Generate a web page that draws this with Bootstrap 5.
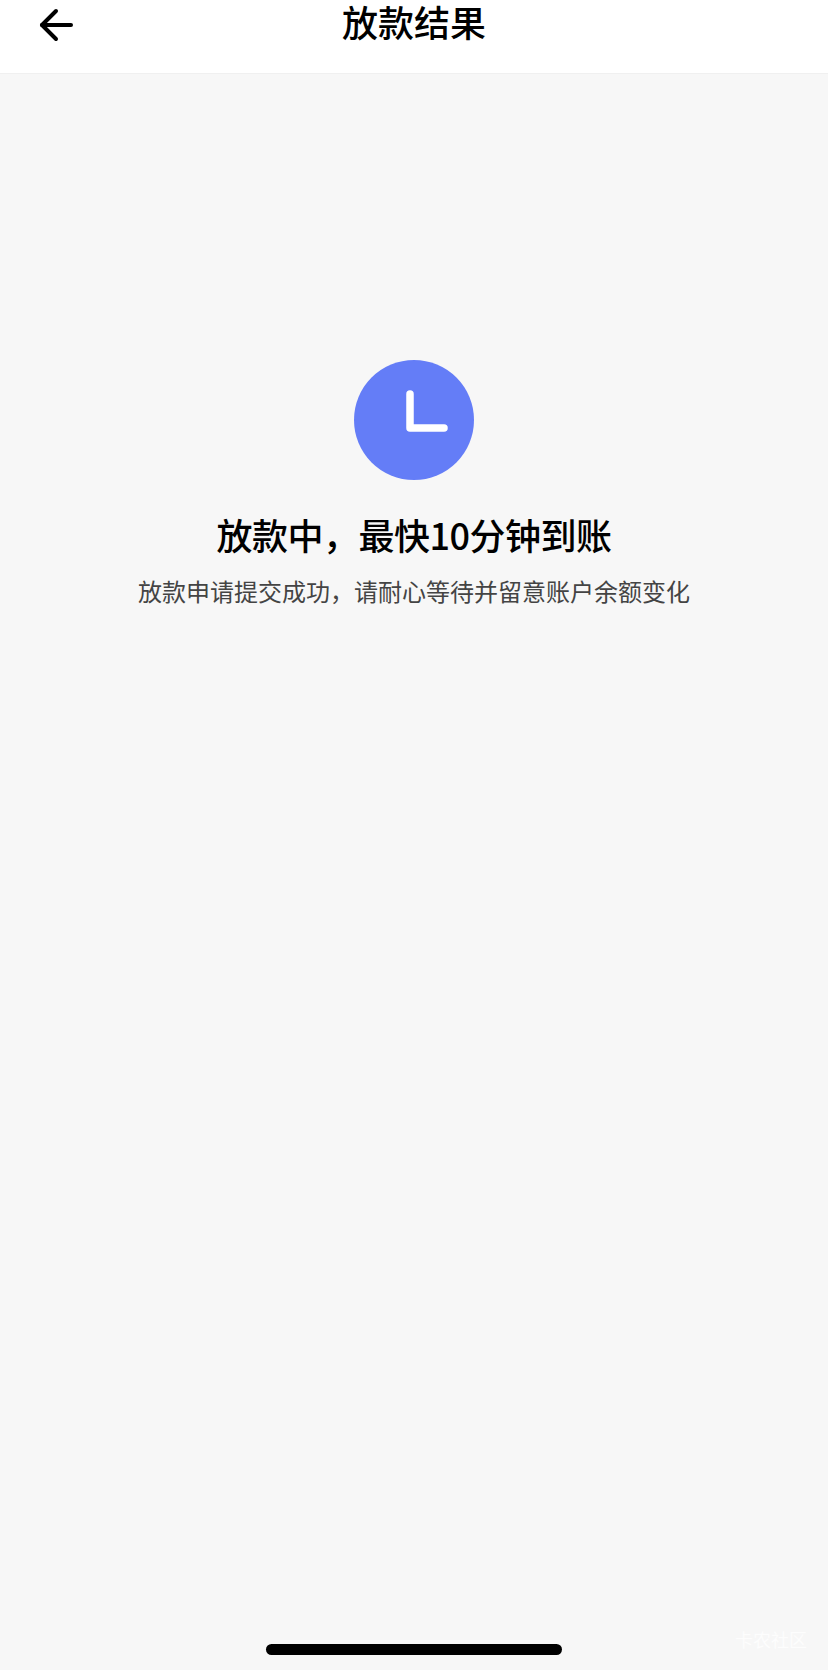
<!DOCTYPE html>
<html lang="zh-CN">
<head>
    <meta charset="UTF-8">
    <meta name="viewport" content="width=device-width, initial-scale=1.0">
    <title>放款结果</title>
    <link href="https://cdn.jsdelivr.net/npm/bootstrap@5.3.3/dist/css/bootstrap.min.css" rel="stylesheet">
    <style>
        body {
            background-color: #f7f7f7;
            font-family: "Noto Sans CJK SC", "Noto Sans", sans-serif;
        }
        .page-wrap {
            height: 1670px;
        }
        .top-bar {
            height: 74px;
            padding-bottom: 24px;
            background-color: #fff;
            border-bottom: 1px solid #f0f0f0;
        }
        .back-btn {
            left: 37px;
            top: 6px;
            width: 38px;
            height: 38px;
        }
        .page-title {
            font-family: "Liberation Sans", "Noto Sans CJK SC", sans-serif;
            font-size: 36px;
            font-weight: 500;
            line-height: 43px;
            color: #000;
        }
        .status-circle {
            width: 120px;
            height: 120px;
            margin-top: 286px;
            background-color: #647df7;
        }
        .status-title {
            margin-top: 29px;
            font-size: 36px;
            font-weight: 500;
            line-height: 50px;
            letter-spacing: -0.5px;
            color: #000;
        }
        .status-desc {
            margin-top: 15px;
            font-size: 24px;
            line-height: 34px;
            color: #444;
        }
        .home-bar {
            width: 296px;
            height: 11px;
            margin-bottom: 15px;
            background-color: #000;
        }
        .watermark {
            right: 21px;
            bottom: 20px;
            font-size: 18px;
            line-height: 22px;
            color: rgba(255, 255, 255, .75);
        }
    </style>
</head>
<body>

<div class="page-wrap position-relative d-flex flex-column align-items-center">
    <div class="top-bar w-100 position-relative d-flex justify-content-center align-items-center">
        <div class="back-btn position-absolute">
            <svg width="38" height="38" viewBox="0 0 38 38" fill="none" stroke="#000" stroke-width="4" stroke-linecap="round" stroke-linejoin="round">
                <path d="M34 19H5"/>
                <path d="M19 5L5 19l14 14"/>
            </svg>
        </div>
        <div class="page-title">放款结果</div>
    </div>

    <div class="status-circle rounded-circle d-flex align-items-center justify-content-center">
        <svg width="120" height="120" viewBox="0 0 120 120" fill="none" stroke="#fff" stroke-width="7.5" stroke-linecap="round" stroke-linejoin="round">
            <path d="M56 34V68H90"/>
        </svg>
    </div>
    <div class="status-title text-center">放款中，最快10分钟到账</div>
    <div class="status-desc text-center">放款申请提交成功，请耐心等待并留意账户余额变化</div>

    <div class="home-bar rounded-pill mt-auto"></div>
    <div class="watermark position-absolute">卡农社区</div>
</div>

</body>
</html>
